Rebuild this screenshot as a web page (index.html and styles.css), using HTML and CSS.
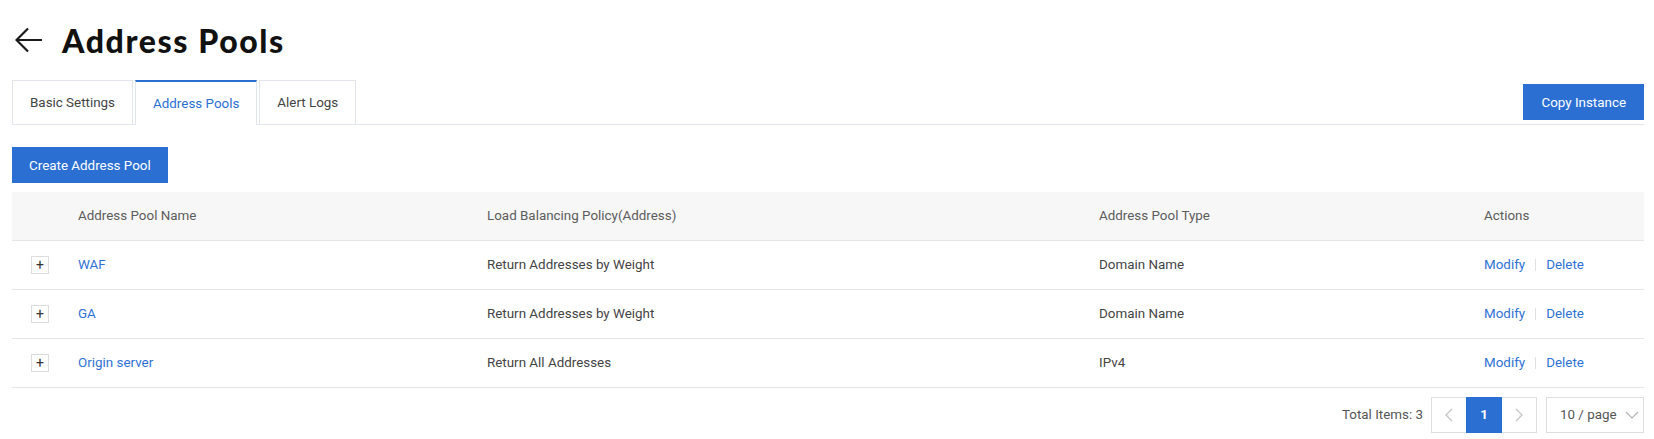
FILE: index.html
```html
<!DOCTYPE html>
<html lang="en">
<head>
<meta charset="utf-8">
<title>Address Pools</title>
<link rel="stylesheet" href="styles.css">
</head>
<body>
<div class="page">
  <header class="title-row">
    <svg class="back" width="28" height="26" viewBox="0 0 28 26" aria-hidden="true">
      <path d="M27 13H2M13 1.5L1.5 13L13 24.5" fill="none" stroke="#1a1a1a" stroke-width="2.2"/>
    </svg>
    <h1 class="title">Address Pools</h1>
  </header>

  <div class="tabbar">
    <nav class="tabs">
      <span class="tab">Basic Settings</span>
      <span class="tab active">Address Pools</span>
      <span class="tab">Alert Logs</span>
    </nav>
    <button class="btn primary copy">Copy Instance</button>
  </div>

  <div class="toolbar">
    <button class="btn primary">Create Address Pool</button>
  </div>

  <table class="grid">
    <colgroup>
      <col class="c-exp"><col class="c-name"><col class="c-policy"><col class="c-type"><col class="c-act">
    </colgroup>
    <thead>
      <tr><th></th><th>Address Pool Name</th><th>Load Balancing Policy(Address)</th><th>Address Pool Type</th><th>Actions</th></tr>
    </thead>
    <tbody>
      <tr>
        <td><span class="expand">+</span></td>
        <td><a class="link">WAF</a></td>
        <td>Return Addresses by Weight</td>
        <td>Domain Name</td>
        <td><a class="link">Modify</a><span class="sep"></span><a class="link">Delete</a></td>
      </tr>
      <tr>
        <td><span class="expand">+</span></td>
        <td><a class="link">GA</a></td>
        <td>Return Addresses by Weight</td>
        <td>Domain Name</td>
        <td><a class="link">Modify</a><span class="sep"></span><a class="link">Delete</a></td>
      </tr>
      <tr>
        <td><span class="expand">+</span></td>
        <td><a class="link">Origin server</a></td>
        <td>Return All Addresses</td>
        <td>IPv4</td>
        <td><a class="link">Modify</a><span class="sep"></span><a class="link">Delete</a></td>
      </tr>
    </tbody>
  </table>

  <div class="pager-row">
    <span class="total">Total Items: 3</span>
    <div class="pager">
      <span class="pg-btn">
        <svg width="10" height="16" viewBox="0 0 10 16"><path d="M8 2L2 8l6 6" fill="none" stroke="#c4c4c4" stroke-width="1.3"/></svg>
      </span>
      <span class="pg-btn current">1</span>
      <span class="pg-btn">
        <svg width="10" height="16" viewBox="0 0 10 16"><path d="M2 2l6 6-6 6" fill="none" stroke="#c4c4c4" stroke-width="1.3"/></svg>
      </span>
    </div>
    <div class="size-select">
      <span>10 / page</span>
      <svg width="14" height="10" viewBox="0 0 14 10"><path d="M1 2l6 6 6-6" fill="none" stroke="#b5b5b5" stroke-width="1.2"/></svg>
    </div>
  </div>
</div>
</body>
</html>
```

FILE: styles.css
```css
* { box-sizing: border-box; }
html, body { margin: 0; padding: 0; background: #fff; }
body {
  font-family: Roboto, "Noto Sans", Arial, sans-serif;
  font-size: 13.4px;
  color: #444;
}
.page { padding: 0 10px 0 12px; }

.title-row {
  display: flex;
  align-items: center;
  height: 80px;
  padding-left: 3px;
}
.back { display: block; }
.title {
  margin: 0 0 0 19px;
  font-family: Lato, Roboto, sans-serif;
  font-weight: 900;
  font-size: 32px;
  color: #111;
  letter-spacing: 1.6px;
}

.tabbar {
  display: flex;
  justify-content: space-between;
  align-items: flex-end;
  height: 45px;
  border-bottom: 1px solid #e2e5ec;
}
.tabs { display: flex; gap: 2px; height: 44px; }
.tab {
  display: flex;
  align-items: center;
  padding: 0 17px;
  border: 1px solid #e2e5ec;
  border-bottom: none;
  color: #444;
  background: #fff;
  height: 44px;
}
.tab.active {
  border-top: 2px solid #2b6fd2;
  color: #2b6fd2;
  height: 45px;
  margin-bottom: -1px;
}
.btn {
  font: inherit;
  border: none;
  cursor: pointer;
}
.primary {
  background: #2b6fd2;
  color: #fff;
  height: 36px;
  padding: 0 17px;
}
.copy { margin-bottom: 4px; padding: 0 18px; }

.toolbar { padding: 22px 0 9px; }

.grid {
  width: 100%;
  border-collapse: collapse;
  table-layout: fixed;
}
.c-exp { width: 50px; }
.c-name { width: 409px; }
.c-policy { width: 612px; }
.c-type { width: 385px; }
.c-act { width: 176px; }
.grid th {
  background: #f7f7f7;
  color: #5c5c5c;
  font-weight: 400;
  text-align: left;
  height: 48px;
  padding: 0 16px;
  border-bottom: 1px solid #e6e6e6;
}
.grid td {
  height: 49px;
  padding: 0 16px;
  border-bottom: 1px solid #e6e6e6;
  color: #444;
}
.grid td:first-child { padding: 0 0 0 19px; }
.expand {
  display: inline-flex;
  width: 18px;
  height: 18px;
  border: 1px solid #dcdcdc;
  align-items: center;
  justify-content: center;
  font-size: 14px;
  line-height: 1;
  color: #333;
  vertical-align: middle;
}
.link { color: #2f72d4; text-decoration: none; cursor: pointer; }
.sep {
  display: inline-block;
  width: 1px;
  height: 12px;
  background: #e0e0e0;
  margin: 0 10px;
  vertical-align: middle;
}

.pager-row {
  display: flex;
  justify-content: flex-end;
  align-items: center;
  margin-top: 9px;
  gap: 8px;
}
.total { color: #555; }
.pager {
  display: flex;
  border: 1px solid #dedede;
  height: 36px;
}
.pg-btn {
  width: 34px;
  height: 34px;
  display: flex;
  align-items: center;
  justify-content: center;
  color: #999;
}
.pg-btn.current {
  width: 36px;
  height: 36px;
  margin-top: -1px;
  background: #2b6fd2;
  color: #fff;
  font-weight: 700;
}
.size-select {
  margin-left: 1px;
  width: 98px;
  height: 36px;
  border: 1px solid #dedede;
  display: flex;
  align-items: center;
  justify-content: space-between;
  padding: 0 4px 0 13px;
  color: #555;
}
```
